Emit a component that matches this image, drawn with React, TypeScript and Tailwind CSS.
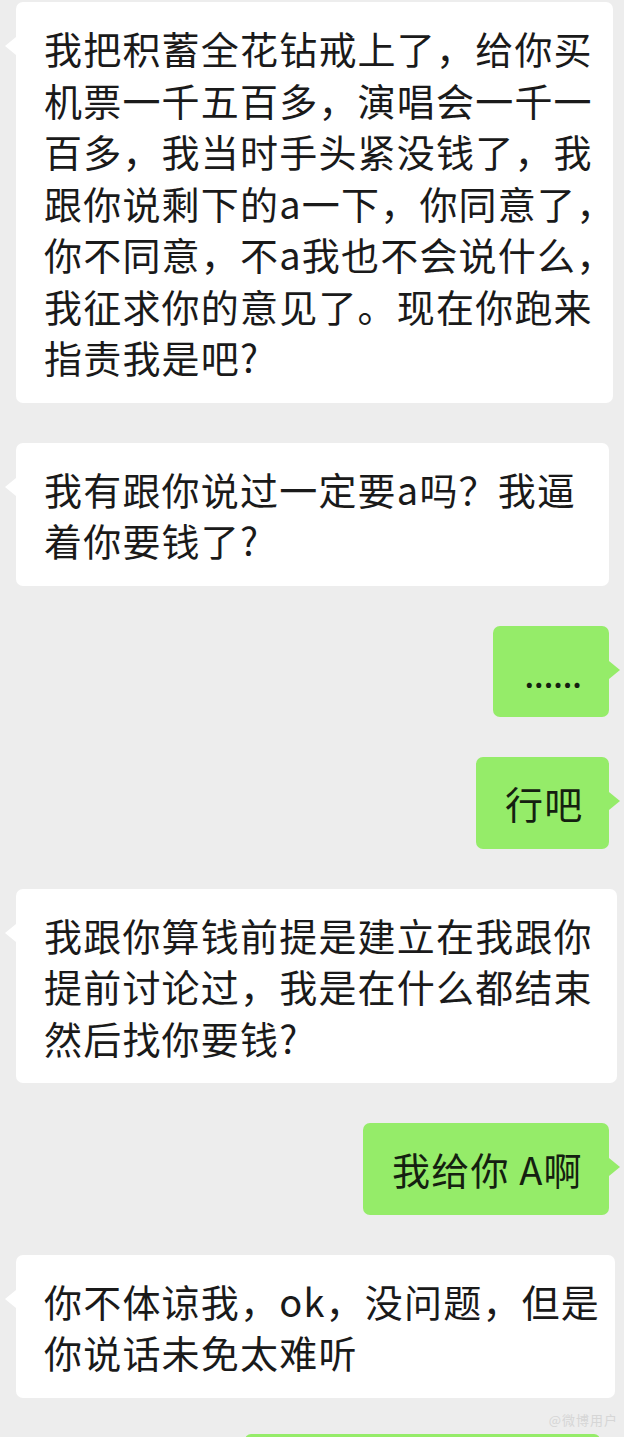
import React from 'react';

type Msg = { side: 'left' | 'right'; lines: string[]; width: string };

const messages: Msg[] = [
  {
    side: 'left',
    width: 'w-[597px]',
    lines: [
      '我把积蓄全花钻戒上了，给你买',
      '机票一千五百多，演唱会一千一',
      '百多，我当时手头紧没钱了，我',
      '跟你说剩下的a一下，你同意了，',
      '你不同意，不a我也不会说什么，',
      '我征求你的意见了。现在你跑来',
      '指责我是吧?',
    ],
  },
  { side: 'left', width: 'w-[593px]', lines: ['我有跟你说过一定要a吗？我逼', '着你要钱了?'] },
  { side: 'right', width: 'w-[116px]', lines: ['......'] },
  { side: 'right', width: 'w-[133px]', lines: ['行吧'] },
  {
    side: 'left',
    width: 'w-[601px]',
    lines: ['我跟你算钱前提是建立在我跟你', '提前讨论过，我是在什么都结束', '然后找你要钱?'],
  },
  { side: 'right', width: 'w-[246px]', lines: ['我给你 A啊'] },
  { side: 'left', width: 'w-[599px]', lines: ['你不体谅我，ok，没问题，但是', '你说话未免太难听'] },
];

export default function App() {
  return (
    <div
      className="w-[624px] h-[1437px] overflow-hidden bg-[#ededed] text-[#1a1a1a] pt-[2px]"
      style={{ fontFamily: '"Noto Sans CJK SC", "Noto Sans", sans-serif' }}
    >
      <div className="flex flex-col gap-[40px]">
        {messages.map((m, i) => (
          <Bubble key={i} msg={m} />
        ))}
      </div>

      <div className="flex justify-end pr-[6px] mt-[8px] h-[28px] items-center">
        <span className="text-[13px] text-[#d6d6d6] tracking-[1px]">@微博用户</span>
      </div>
      <div className="pl-[245px] pr-[24px]">
        <div className="h-[40px] rounded-[6px] bg-[#95ec69]" />
      </div>
    </div>
  );
}

function Bubble({ msg }: { msg: Msg }) {
  const isLeft = msg.side === 'left';
  const isDots = msg.lines[0] === '......';
  return (
    <div className={`flex ${isLeft ? 'justify-start pl-[16px]' : 'justify-end pr-[15px]'}`}>
      <div
        className={`relative ${msg.width} rounded-[7px] py-[20px] text-[38px] leading-[51.5px] whitespace-nowrap ${
          isDots ? 'tracking-[-1px] pl-[31px]' : isLeft ? 'tracking-[1.2px] pl-[28px]' : 'tracking-[1.2px] pl-[29px]'
        } ${isLeft ? 'bg-white' : 'bg-[#95ec69] text-[#142010]'}`}
      >
        {isLeft ? (
          <span className="absolute -left-[11px] top-[35px] w-0 h-0 border-y-[9px] border-y-transparent border-r-[11px] border-r-white" />
        ) : (
          <span className="absolute -right-[11px] top-[35px] w-0 h-0 border-y-[9px] border-y-transparent border-l-[11px] border-l-[#95ec69]" />
        )}
        {msg.lines.map((line, i) => (
          <div key={i}>{line}</div>
        ))}
      </div>
    </div>
  );
}
